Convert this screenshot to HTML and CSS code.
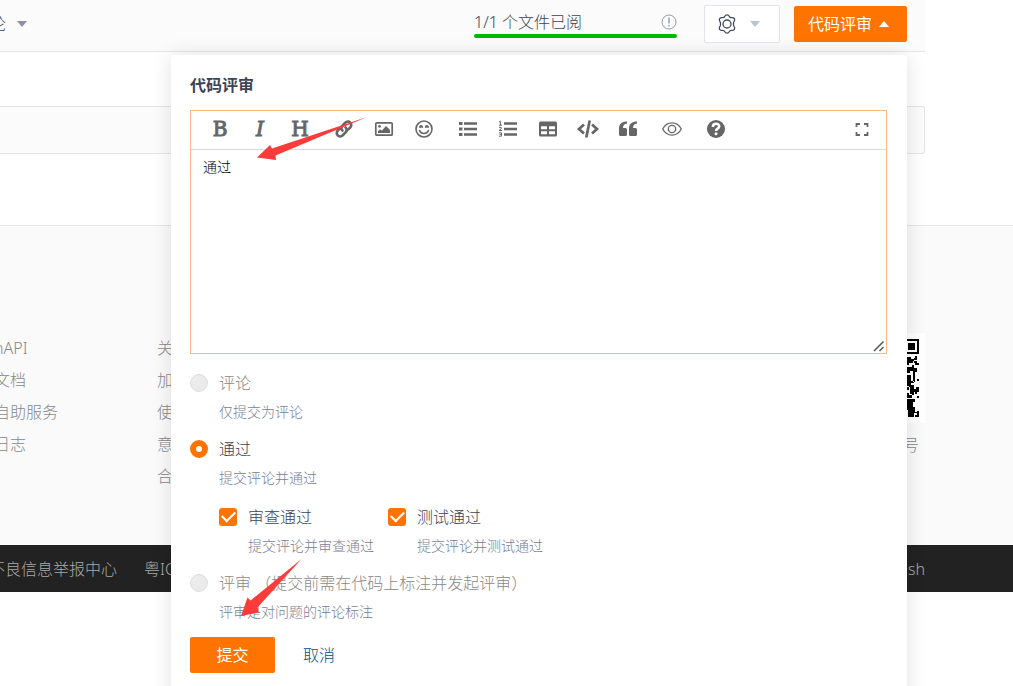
FILE: index.html
```html
<!DOCTYPE html>
<html lang="zh-CN">
<head>
<meta charset="utf-8">
<meta name="viewport" content="width=device-width, initial-scale=1">
<title>代码评审</title>
<link rel="stylesheet" href="styles.css">
</head>
<body>
<header class="topbar">
  <button class="comment-menu" type="button">论 <span class="caret caret-slate"></span></button>
  <div class="progress">
    <div class="progress-row">
      <span>1/1 个文件已阅</span>
      <svg class="info" viewBox="0 0 16 16" width="16" height="16" fill="none" stroke="#949bb0"><circle cx="8" cy="8" r="7"/><path d="M8 3.5v6M8 11v1.5" stroke-width="1.4"/></svg>
    </div>
    <div class="progress-bar"></div>
  </div>
  <button class="settings" type="button" aria-label="设置">
    <svg viewBox="0 0 20 20" width="20" height="20" fill="none" stroke="#434a5e" stroke-width="1.3" stroke-linejoin="round"><path d="M10 .8c1.300 0 1.900.6 2.400 1.700.4.9 1.100 1.200 2 1.100 1.300-.2 2.300-.1 3 1.100s.3 2.100-.5 3.100c-.6.8-.6 3.600 0 4.400.8 1 1.200 1.900.5 3.100s-1.700 1.300-3 1.100c-.9-.1-1.600.2-2 1.100-.5 1.100-1.100 1.700-2.400 1.700s-1.900-.6-2.400-1.700c-.4-.9-1.100-1.200-2-1.100-1.300.2-2.300.1-3-1.100s-.3-2.100.5-3.100c.6-.8.6-3.600 0-4.400-.8-1-1.200-1.900-.5-3.100s1.700-1.300 3-1.100c.9.100 1.600-.2 2-1.100C8.100 1.400 8.700.8 10 .8z"/><circle cx="10" cy="10" r="4"/></svg>
    <span class="caret caret-light"></span>
  </button>
  <button class="review-toggle" type="button" aria-expanded="true">代码评审 <span class="caret caret-up"></span></button>

  <form class="panel">
    <h2>代码评审</h2>
    <div class="editor">
      <div class="toolbar">
        <div class="group">
          <button class="tool letter" type="button">B</button>
          <button class="tool letter italic" type="button">I</button>
          <button class="tool letter" type="button">H</button>
        </div>
        <div class="group">
          <button class="tool" type="button" aria-label="链接"><svg viewBox="0 0 20 20" fill="none" stroke="#666" stroke-width="2.6" stroke-linecap="round"><path d="M8.500 11.700C6.800 10 6.800 8.300 8.200 6.800l3-3c1.600-1.500 3.800-1.500 5.100-.2s1.300 3.500-.1 4.900l-1.800 1.800"/><path d="M11.500 8.300c1.700 1.700 1.700 3.400.3 4.900l-3 3c-1.600 1.500-3.800 1.500-5.100.2s-1.300-3.500.1-4.900l1.800-1.800"/></svg></button>
          <button class="tool" type="button" aria-label="图片"><svg viewBox="0 0 20 20"><rect x="1.800" y="3.800" width="16.400" height="12.400" rx="1" fill="none" stroke="#666" stroke-width="1.700"/><circle cx="5.500" cy="7.300" r="1.400"/><path d="M4 14v-2l2-1.500 2 1 4-4.500 4 4V14z"/></svg></button>
          <button class="tool" type="button" aria-label="表情"><svg viewBox="0 0 20 20" fill="none" stroke="#666" stroke-width="1.600" stroke-linecap="round"><circle cx="10" cy="10" r="8"/><path d="M5.500 11.500c1.500 4 7.500 4 9 0"/><path d="M6 8q1-1.800 2.200 0M11.800 8q1-1.800 2.200 0" stroke-width="2"/></svg></button>
        </div>
        <div class="group">
          <button class="tool" type="button" aria-label="无序列表"><svg viewBox="0 0 20 20"><path d="M1 3h3.500v3H1zM6 3.200h13v2.600H6zM1 8.500h3.500v3H1zM6 8.700h13v2.600H6zM1 14h3.500v3H1zM6 14.200h13v2.600H6z"/></svg></button>
          <button class="tool" type="button" aria-label="有序列表"><svg viewBox="0 0 20 20"><path d="M6 3.200h13v2.600H6zM6 8.700h13v2.600H6zM6 14.200h13v2.600H6z"/><path d="M1 3l1.400-.8v4M1 6.200h3M1 8.400h2.200v1.400L1 11.500h3M1 13.800h2.500v3.400H1M1.500 15.400h2" fill="none" stroke="#666"/></svg></button>
          <button class="tool" type="button" aria-label="表格"><svg viewBox="0 0 20 20"><path fill-rule="evenodd" d="M2.500 2.500h15A1.500 1.500 0 0 1 19 4v12a1.500 1.500 0 0 1-1.500 1.500h-15A1.500 1.500 0 0 1 1 16V4a1.500 1.500 0 0 1 1.500-1.500zM3 7.200v3h6v-3zm8 0v3h6v-3zm-8 5v3h6v-3zm8 0v3h6v-3z"/></svg></button>
          <button class="tool" type="button" aria-label="代码"><svg class="wide" viewBox="0 0 24 20" fill="none" stroke="#666" stroke-width="2.700"><path d="M8 5.500L3 10l5 4.500M16 5.500l5 4.500-5 4.500M13.700 1.500l-3.400 17"/></svg></button>
          <button class="tool" type="button" aria-label="引用"><svg viewBox="0 0 20 20"><path id="quote-mark" d="M9 2.500v2C6.500 4.700 5 6.300 5 9h2.500A1.500 1.500 0 0 1 9 10.500v5A1.500 1.500 0 0 1 7.500 17h-5A1.500 1.500 0 0 1 1 15.500V9.200c0-4 3-6.700 8-6.700z"/><use href="#quote-mark" x="10"/></svg></button>
        </div>
        <div class="group">
          <button class="tool" type="button" aria-label="预览"><svg viewBox="0 0 20 20" fill="none" stroke="#666" stroke-width="1.300"><path d="M.7 10C5 1.800 15 1.800 19.300 10 15 18.200 5 18.200.7 10z"/><circle cx="10" cy="10" r="3.700"/></svg></button>
        </div>
        <div class="group">
          <button class="tool" type="button" aria-label="帮助"><svg viewBox="0 0 20 20"><circle cx="10" cy="10" r="9"/><path d="M6.800 8C7 3.700 13.500 4 13.200 7.600 13 9.700 10 9.600 10 12" fill="none" stroke="#fff" stroke-width="2.500"/><circle cx="10" cy="14.700" r="1.500" fill="#fff"/></svg></button>
        </div>
        <button class="tool fullscreen" type="button" aria-label="全屏"><svg viewBox="0 0 20 20" fill="none" stroke="#666" stroke-width="1.800"><path d="M4.500 8V5H8M12 5h3.500v3M15.500 13v3H12M8 16H4.500v-3"/></svg></button>
      </div>
      <textarea class="editor-text" aria-label="评审内容">通过</textarea>
      <svg class="grip" viewBox="0 0 12 12" width="12" height="12" stroke="#555" stroke-width="1.500"><path d="M1 11L10.500 1.500M6.500 11l4-4"/></svg>
    </div>

    <div class="options">
      <label class="option muted"><input class="radio" type="radio" name="result" disabled><span class="name">评论</span><span class="hint">仅提交为评论</span></label>
      <label class="option"><input class="radio" type="radio" name="result" checked><span class="name">通过</span><span class="hint">提交评论并通过</span></label>
      <div class="checks">
        <label class="option"><input class="check" type="checkbox" checked><span class="name">审查通过</span><span class="hint">提交评论并审查通过</span></label>
        <label class="option"><input class="check" type="checkbox" checked><span class="name">测试通过</span><span class="hint">提交评论并测试通过</span></label>
      </div>
      <label class="option muted"><input class="radio" type="radio" name="result" disabled><span class="name">评审 （提交前需在代码上标注并发起评审）</span><span class="hint">评审是对问题的评论标注</span></label>
    </div>
    <div class="actions">
      <button class="submit" type="button">提交</button>
      <a class="cancel" href="#">取消</a>
    </div>
    <svg class="arrows" viewBox="0 0 736 631" width="736" height="631" fill="#fc3b3b"><path d="M86 102.500L99 90l2 3.500L196 62l-91.500 38.500.5 4.500zM70 561l6.500-18.500 3 3L130.500 504 86.500 552.500l1.500 5z"/></svg>
  </form>
</header>

<main class="content">
  <div class="file-bar"></div>
</main>

<footer>
  <div class="links">
    <div class="wrap">
      <nav class="column column-docs">
        <a href="#">nAPI</a><a href="#">文档</a><a href="#">自助服务</a><a href="#">日志</a>
      </nav>
      <nav class="column">
        <a href="#">关</a><a href="#">加</a><a href="#">使</a><a href="#">意</a><a href="#">合</a>
      </nav>
      <div class="qr">
        <svg viewBox="0 0 90 90" width="90" height="90"><path fill="#fff" d="M0 0h90v90H0z"/><path fill="#000" fill-rule="evenodd" d="M69 6h15v15H69zm2 2v11h11V8zM73 10h7v7h-7zM80 23h2v2h-2zM72 24h4v2h3v-1h3v2h-3v3h-5v2h-2zM78 28h4v2h2v2h-4v-2h-2zM72 34h5v-2h2v3h3v4h-2v10h-2V38h-3v2h-3zM82 46h2v2h-2zM72 42h4v6h3v2h-3v2h3v4h2v-2h3v5h-2v2h-2v-2h-3v2h-2v-7h-3zM72 53h2v4h-2zM72 60h2v2h3v-3h2v3h-2v3h-5zM82 63h2v2h-2zM72 66h8v3h-2v5h2v3h-8zM73 77h7v2h2v-1h2v6h-4v-2h2v-2h-3v4h-6z"/></svg>
        <span>号</span>
      </div>
    </div>
  </div>
  <div class="legal">
    <div class="wrap">
      <a class="report" href="#">不良信息举报中心</a>
      <a href="#">粤IC</a>
      <a class="language" href="#">ish</a>
    </div>
  </div>
</footer>
</body>
</html>
```
FILE: styles.css
```css
* { box-sizing: border-box; }
html { overflow: hidden; }
body {
  min-height: 100vh;
  margin: 0;
  background: #fff;
  color: #3c4357;
  font: 300 16px/24px "Noto Sans", "Noto Sans CJK SC", sans-serif;
}
button, textarea { font: inherit; color: inherit; }
button { border: 0; padding: 0; background: none; }
a { color: inherit; text-decoration: none; }

.topbar {
  position: relative;
  display: flex;
  align-items: center;
  height: 52px;
  margin-right: 88px;
  padding: 0 18px 3px 0;
  background: #fbfbfb;
  border-bottom: 1px solid #e4e5e7;
}
.comment-menu {
  display: flex;
  align-items: center;
  gap: 11px;
  margin-left: -10px;
  margin-right: auto;
}
.caret {
  width: 0;
  border: 5px solid transparent;
  border-bottom: 0;
}
.caret-slate { border-top: 6px solid #8b90a8; }
.caret-light { border-top: 6px solid #b8c4ce; }
.caret-up { border: 5px solid transparent; border-top: 0; border-bottom: 6px solid #fff; }

.progress { width: 203px; margin-right: 27px; }
.progress-row { display: flex; justify-content: space-between; align-items: center; }
.progress-bar { height: 4px; border-radius: 2px; background: #00b800; }
.settings {
  display: flex;
  align-items: center;
  gap: 13px;
  width: 76px;
  height: 38px;
  margin-right: 14px;
  padding-left: 12px;
  background: #fff;
  border: 1px solid #e2e5e9;
  border-radius: 2px;
}
.review-toggle {
  display: flex;
  align-items: center;
  justify-content: center;
  gap: 7px;
  width: 113px;
  height: 36px;
  padding-right: 4px;
  border-radius: 2px;
  background: #ff7300;
  color: #fff;
  font-weight: 400;
}

.panel {
  position: absolute;
  z-index: 2;
  top: 55px;
  right: 18px;
  width: 736px;
  padding: 18px 20px 40px 19px;
  border-radius: 4px;
  background: #fff;
  box-shadow: 0 0 20px rgba(0, 0, 0, .12);
}
.panel h2 { margin: 0 0 13px; font-size: 16px; line-height: 24px; font-weight: 600; }

.editor { position: relative; border: 1px solid #ffb87c; }
.toolbar {
  display: flex;
  gap: 4px;
  height: 39px;
  padding: 0 4px 0 9px;
  border-bottom: 1px solid #dcdcdc;
}
.group { display: flex; }
.tool {
  display: flex;
  align-items: center;
  justify-content: center;
  width: 40px;
  height: 36px;
  color: #666;
}
.tool svg { width: 20px; height: 20px; fill: #666; }
.tool svg[fill="none"] { fill: none; }
.tool .wide { width: 24px; }
.letter {
  font: 400 20px/36px "DejaVu Serif", serif;
  -webkit-text-stroke: 1px #666;
}
.italic { font-style: italic; }
.fullscreen { margin-left: auto; }
.editor-text {
  display: block;
  width: 100%;
  height: 203px;
  padding: 7px 12px;
  border: 0;
  outline: 0;
  resize: none;
  background: #fff;
  color: #000;
  font-size: 14px;
  line-height: 20px;
}
.grip { position: absolute; right: 1px; bottom: 1px; }

.options { display: flex; flex-direction: column; gap: 15px; padding-top: 17px; }
.option {
  display: grid;
  grid-template-columns: 18px 1fr;
  column-gap: 11px;
  row-gap: 7px;
  align-items: center;
}
.option input { appearance: none; width: 18px; height: 18px; margin: 0; }
.radio { border: 1px solid #e0e0e0; border-radius: 50%; background: #ebebeb; }
.radio:checked { border: 6px solid #ff7300; background: #fff; }
.check { display: grid; place-items: center; border-radius: 3px; background: #ff7300; }
.check::after {
  content: "";
  width: 11px;
  height: 6px;
  margin-bottom: 4px;
  border: solid #fff;
  border-width: 0 0 2px 2px;
  transform: rotate(-45deg);
}
.hint { grid-column: 2; font-size: 14px; line-height: 20px; color: #777e98; }
.muted .name { color: #888; }
.checks { display: flex; margin-top: 2px; padding-left: 29px; }
.checks .option { width: 169px; }

.actions { display: flex; align-items: center; gap: 28px; margin-top: 15px; }
.submit {
  width: 85px;
  height: 36px;
  border-radius: 2px;
  background: #ff7300;
  color: #fff;
  font-weight: 400;
}
.cancel { color: #00507c; }
.arrows { position: absolute; top: 0; left: 0; pointer-events: none; }

.content { margin-right: 88px; padding: 54px 0 71px; }
.file-bar {
  height: 48px;
  background: #fbfbfb;
  border: 1px solid #e4e5e9;
  border-left: 0;
  border-radius: 0 3px 3px 0;
}

.wrap { display: flex; margin-right: 88px; }
.links {
  padding: 106px 0 53px;
  border-top: 1px solid #e4e5e7;
  background: #fafafa;
  color: #888;
}
.column { display: flex; flex-direction: column; width: 100px; line-height: 32px; }
.column-docs { width: 163px; margin-left: -6px; }
.qr { display: flex; flex-direction: column; gap: 10px; margin: 1px 0 0 auto; }
.qr span { align-self: flex-end; padding-right: 6px; }
.legal { padding: 12px 0 11px; background: #222; color: #aaa; }
.legal .wrap { gap: 27px; }
.report { margin-left: -11px; }
.language { margin-left: auto; }
```
